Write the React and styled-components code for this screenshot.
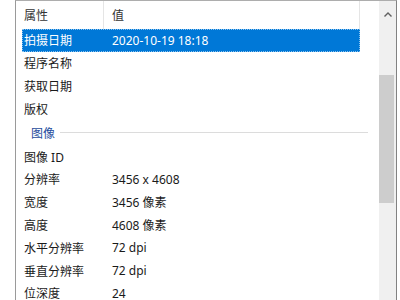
import React from 'react';
import styled, { createGlobalStyle } from 'styled-components';

const GlobalStyle = createGlobalStyle`
  html, body {
    margin: 0;
    padding: 0;
    background: #ffffff;
  }
  body {
    font-family: "Noto Sans", "Noto Sans CJK SC", sans-serif;
    font-size: 12px;
    color: #1a1a1a;
  }
`;

const Page = styled.div`
  width: 400px;
  height: 300px;
  padding-left: 15px;
  box-sizing: border-box;
  overflow: hidden;
  background: #fff;
`;

const Frame = styled.div`
  width: 382px;
  height: 320px;
  display: flex;
  border-left: 1px solid #9a9a9a;
  border-top: 1px solid #adadad;
  border-right: 1px solid #828282;
  box-sizing: border-box;
`;

const List = styled.div`
  flex: 1;
  display: flex;
  flex-direction: column;
  padding-left: 6px;
  padding-right: 17px;
`;

const Header = styled.div`
  display: flex;
  height: 28px;
  align-items: center;
  color: #333;
`;

const HeaderCell = styled.div`
  width: ${p => p.w}px;
  height: 100%;
  box-sizing: border-box;
  display: flex;
  align-items: center;
  padding-left: ${p => p.pl}px;
  border-right: 1px solid #e5e5e5;
`;

const Row = styled.div`
  display: flex;
  align-items: center;
  height: 22.8px;
  width: 338px;
  box-sizing: border-box;
  background: ${p => (p.selected ? '#0078d7' : 'transparent')};
  color: ${p => (p.selected ? '#ffffff' : '#1a1a1a')};
  outline: ${p => (p.selected ? '1px dotted rgba(255,255,255,0.55)' : 'none')};
  outline-offset: -1px;
`;

const Name = styled.div`
  width: 88px;
  padding-left: 2px;
  white-space: nowrap;
`;

const Value = styled.div`
  white-space: nowrap;
`;

const GroupRow = styled.div`
  display: flex;
  align-items: center;
  height: 25px;
  padding-left: 9px;
  width: 346px;
  box-sizing: border-box;
  gap: 5px;
  color: #1e4b9c;
  &::after {
    content: '';
    flex: 1;
    height: 1px;
    background: #dcdcdc;
  }
`;

const ScrollBar = styled.div`
  width: 17px;
  margin-left: -17px;
  background: #f0f0f0;
  display: flex;
  flex-direction: column;
  align-items: stretch;
`;

const Arrow = styled.div`
  display: flex;
  align-items: center;
  justify-content: center;
  padding-top: 6px;
  box-sizing: border-box;
  height: 20px;
`;

const Thumb = styled.div`
  margin-top: 54px;
  margin-right: 2px;
  height: 128px;
  background: #cdcdcd;
`;

const rows = [
  { name: '程序名称', value: '' },
  { name: '获取日期', value: '' },
  { name: '版权', value: '' },
];

const imageRows = [
  { name: '图像 ID', value: '' },
  { name: '分辨率', value: '3456 x 4608' },
  { name: '宽度', value: '3456 像素' },
  { name: '高度', value: '4608 像素' },
  { name: '水平分辨率', value: '72 dpi' },
  { name: '垂直分辨率', value: '72 dpi' },
  { name: '位深度', value: '24' },
];

export default function App() {
  return (
    <Page>
      <GlobalStyle />
      <Frame>
        <List>
          <Header>
            <HeaderCell w={82} pl={2}>属性</HeaderCell>
            <HeaderCell w={256} pl={8}>值</HeaderCell>
          </Header>
          <Row selected>
            <Name>拍摄日期</Name>
            <Value>2020-10-19 18:18</Value>
          </Row>
          {rows.map(r => (
            <Row key={r.name}>
              <Name>{r.name}</Name>
              <Value>{r.value}</Value>
            </Row>
          ))}
          <GroupRow>图像</GroupRow>
          {imageRows.map(r => (
            <Row key={r.name}>
              <Name>{r.name}</Name>
              <Value>{r.value}</Value>
            </Row>
          ))}
        </List>
        <ScrollBar>
          <Arrow>
            <svg width="8" height="5" viewBox="0 0 8 5">
              <path d="M0.5 4.5 L4 1 L7.5 4.5" fill="none" stroke="#606060" strokeWidth="1.4" />
            </svg>
          </Arrow>
          <Thumb />
        </ScrollBar>
      </Frame>
    </Page>
  );
}
